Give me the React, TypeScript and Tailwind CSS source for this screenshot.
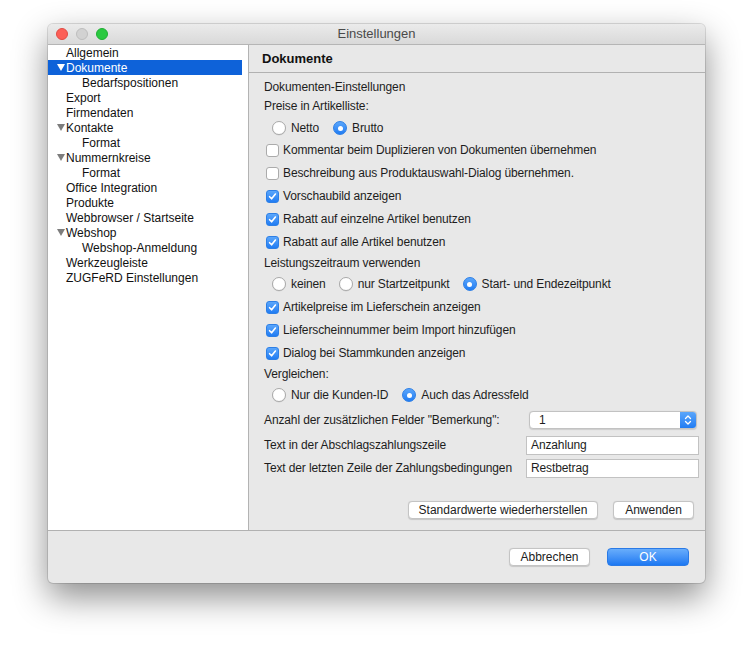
import React from "react";

const Tri = ({ white }: { white?: boolean }) => (
  <svg width="8" height="7" viewBox="0 0 8 7" className="shrink-0">
    <path d="M0 0 H8 L4 7 Z" fill={white ? "#ffffff" : "#7d7d7d"} />
  </svg>
);

type Item = { label: string; level: 0 | 1; tri?: boolean; sel?: boolean };
const items: Item[] = [
  { label: "Allgemein", level: 0 },
  { label: "Dokumente", level: 0, tri: true, sel: true },
  { label: "Bedarfspositionen", level: 1 },
  { label: "Export", level: 0 },
  { label: "Firmendaten", level: 0 },
  { label: "Kontakte", level: 0, tri: true },
  { label: "Format", level: 1 },
  { label: "Nummernkreise", level: 0, tri: true },
  { label: "Format", level: 1 },
  { label: "Office Integration", level: 0 },
  { label: "Produkte", level: 0 },
  { label: "Webbrowser / Startseite", level: 0 },
  { label: "Webshop", level: 0, tri: true },
  { label: "Webshop-Anmeldung", level: 1 },
  { label: "Werkzeugleiste", level: 0 },
  { label: "ZUGFeRD Einstellungen", level: 0 },
];

const Radio = ({ on, label }: { on?: boolean; label: string }) => (
  <div className="flex items-center gap-[5px]">
    {on ? (
      <div className="w-[14px] h-[14px] rounded-full bg-gradient-to-b from-[#5aa6fb] to-[#1f7cf3] border border-[#2d7fe6] flex items-center justify-center">
        <div className="w-[5px] h-[5px] rounded-full bg-white" />
      </div>
    ) : (
      <div className="w-[14px] h-[14px] rounded-full bg-white border border-[#a9a9a9] shadow-[0_0.5px_0.5px_rgba(0,0,0,0.1)]" />
    )}
    <span>{label}</span>
  </div>
);

const Check = ({ on, label }: { on?: boolean; label: string }) => (
  <div className="flex items-center gap-[4px] ml-[2px]">
    {on ? (
      <div className="w-[13px] h-[13px] rounded-[3px] bg-gradient-to-b from-[#5aa6fb] to-[#1f7cf3] border border-[#2d7fe6] flex items-center justify-center">
        <svg width="9" height="9" viewBox="0 0 9 9">
          <path d="M1.6 4.7 L3.6 6.8 L7.4 2" fill="none" stroke="#fff" strokeWidth="1.6" strokeLinecap="round" strokeLinejoin="round" />
        </svg>
      </div>
    ) : (
      <div className="w-[13px] h-[13px] rounded-[3px] bg-white border border-[#ababab]" />
    )}
    <span>{label}</span>
  </div>
);

const Btn = ({ children, w }: { children: React.ReactNode; w: string }) => (
  <div className={`${w} h-[18px] rounded-[4px] bg-white border border-[#c4c4c4] shadow-[0_0.5px_1px_rgba(0,0,0,0.15)] flex items-center justify-center text-[12px] text-[#222]`}>
    {children}
  </div>
);

export default function App() {
  return (
    <div className="w-[753px] h-[655px] bg-white pt-[24px] pl-[48px] font-['Liberation_Sans',Arial,sans-serif] text-[12px] text-[#1d1d1d] overflow-hidden">
      <div className="w-[657px] h-[559px] rounded-[5px] overflow-hidden flex flex-col bg-[#e8e8e8] shadow-[0_14px_34px_rgba(0,0,0,0.45),0_0_0_1px_rgba(0,0,0,0.12)]">
        {/* title bar */}
        <div className="h-[21px] shrink-0 bg-gradient-to-b from-[#ebebeb] to-[#d9d9d9] border-b border-[#b5b5b5] flex items-center relative">
          <div className="flex items-center gap-[8px] pl-[8px]">
            <div className="w-[12px] h-[12px] rounded-full bg-[#fc5f57] border border-[#e04c45]" />
            <div className="w-[12px] h-[12px] rounded-full bg-[#d2d2d2] border border-[#bdbdbd]" />
            <div className="w-[12px] h-[12px] rounded-full bg-[#2ac940] border border-[#1fae33]" />
          </div>
          <div className="absolute inset-0 flex items-center justify-center text-[13px] text-[#4a4a4a]">Einstellungen</div>
        </div>
        {/* main */}
        <div className="flex h-[486px] shrink-0 border-b border-[#b1b1b1]">
          {/* sidebar */}
          <div className="w-[201px] shrink-0 bg-white border-r border-[#b3b3b3] pr-[6px]">
            {items.map((it, i) => (
              <div
                key={i}
                className={`h-[15px] flex items-center ${it.sel ? "bg-[#0e62d9] text-white" : "text-[#111]"}`}
              >
                {it.level === 0 ? (
                  <div className="flex items-center">
                    <div className="w-[18px] flex justify-end pr-[1px]">{it.tri ? <Tri white={it.sel} /> : null}</div>
                    <span>{it.label}</span>
                  </div>
                ) : (
                  <span className="pl-[34px]">{it.label}</span>
                )}
              </div>
            ))}
          </div>
          {/* right panel */}
          <div className="flex-1 flex flex-col tracking-[-0.12px]">
            <div className="h-[28px] shrink-0 border-b border-[#b1b1b1] flex items-center pl-[13px] text-[13px] font-bold text-[#111] tracking-normal">
              Dokumente
            </div>
            <div className="pl-[15px] pr-[6px] flex flex-col">
              <div className="h-[16px] mt-[6px] flex items-center">Dokumenten-Einstellungen</div>
              <div className="h-[16px] mt-[3px] flex items-center">Preise in Artikelliste:</div>
              <div className="h-[16px] mt-[6px] flex items-center gap-[14px] pl-[8px]">
                <Radio label="Netto" />
                <Radio on label="Brutto" />
              </div>
              <div className="h-[16px] mt-[6px] flex items-center"><Check label="Kommentar beim Duplizieren von Dokumenten übernehmen" /></div>
              <div className="h-[16px] mt-[7px] flex items-center"><Check label="Beschreibung aus Produktauswahl-Dialog übernehmen." /></div>
              <div className="h-[16px] mt-[7px] flex items-center"><Check on label="Vorschaubild anzeigen" /></div>
              <div className="h-[16px] mt-[7px] flex items-center"><Check on label="Rabatt auf einzelne Artikel benutzen" /></div>
              <div className="h-[16px] mt-[7px] flex items-center"><Check on label="Rabatt auf alle Artikel benutzen" /></div>
              <div className="h-[16px] mt-[5px] flex items-center">Leistungszeitraum verwenden</div>
              <div className="h-[16px] mt-[5px] flex items-center gap-[13px] pl-[8px]">
                <Radio label="keinen" />
                <Radio label="nur Startzeitpunkt" />
                <Radio on label="Start- und Endezeitpunkt" />
              </div>
              <div className="h-[16px] mt-[7px] flex items-center"><Check on label="Artikelpreise im Lieferschein anzeigen" /></div>
              <div className="h-[16px] mt-[7px] flex items-center"><Check on label="Lieferscheinnummer beim Import hinzufügen" /></div>
              <div className="h-[16px] mt-[7px] flex items-center"><Check on label="Dialog bei Stammkunden anzeigen" /></div>
              <div className="h-[16px] mt-[5px] flex items-center">Vergleichen:</div>
              <div className="h-[16px] mt-[5px] flex items-center gap-[14px] pl-[8px]">
                <Radio label="Nur die Kunden-ID" />
                <Radio on label="Auch das Adressfeld" />
              </div>
              <div className="h-[16px] mt-[9px] flex items-center justify-between">
                <span>Anzahl der zusätzlichen Felder "Bemerkung":</span>
                <div className="w-[168px] h-[18px] mr-[2px] rounded-[4px] bg-white border border-[#c2c2c2] shadow-[0_0.5px_1px_rgba(0,0,0,0.12)] flex items-center overflow-hidden">
                  <span className="flex-1 pl-[9px]">1</span>
                  <div className="w-[16px] h-full bg-gradient-to-b from-[#5aa6fb] to-[#1f7cf3] flex items-center justify-center">
                    <svg width="8" height="12" viewBox="0 0 8 12">
                      <path d="M1.5 4.5 L4 2 L6.5 4.5 M1.5 7.5 L4 10 L6.5 7.5" fill="none" stroke="#fff" strokeWidth="1.3" strokeLinecap="round" strokeLinejoin="round" />
                    </svg>
                  </div>
                </div>
              </div>
              <div className="h-[16px] mt-[9px] flex items-center justify-between">
                <span>Text in der Abschlagszahlungszeile</span>
                <div className="w-[173px] h-[19px] bg-white border border-[#c2c2c2] flex items-center pl-[4px]">Anzahlung</div>
              </div>
              <div className="h-[16px] mt-[7px] flex items-center justify-between">
                <span>Text der letzten Zeile der Zahlungsbedingungen</span>
                <div className="w-[173px] h-[19px] bg-white border border-[#c2c2c2] flex items-center pl-[4px]">Restbetrag</div>
              </div>
            </div>
            <div className="mt-auto mb-[11px] flex justify-end gap-[15px] pr-[11px] tracking-normal">
              <Btn w="w-[190px]">Standardwerte wiederherstellen</Btn>
              <Btn w="w-[81px]">Anwenden</Btn>
            </div>
          </div>
        </div>
        {/* bottom bar */}
        <div className="flex-1 flex items-center justify-end gap-[17px] pr-[16px] pb-[1px]">
          <Btn w="w-[81px]">Abbrechen</Btn>
          <div className="w-[82px] h-[18px] rounded-[4px] bg-gradient-to-b from-[#68adfb] to-[#1b78f2] border border-[#2a7ae6] flex items-center justify-center text-white text-[12px]">
            OK
          </div>
        </div>
      </div>
    </div>
  );
}
